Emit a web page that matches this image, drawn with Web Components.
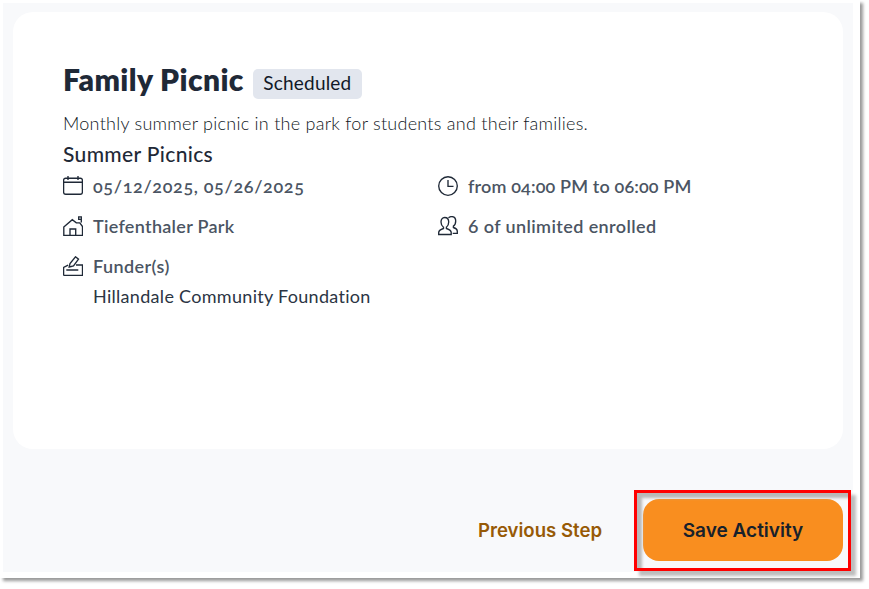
<!DOCTYPE html>
<html>
<head>
<meta charset="utf-8">
<style>
  html, body { margin: 0; padding: 0; background: #fff; }
  body { font-family: "Lato", "Liberation Sans", sans-serif; width: 869px; height: 589px; overflow: hidden; }
  .date { letter-spacing: .65px; font-variant-numeric: oldstyle-nums; }
  .time { letter-spacing: .15px; font-variant-numeric: oldstyle-nums; }
  .enrolled { letter-spacing: .4px; }
  .funder { letter-spacing: .42px; }
</style>
</head>
<body>
<shot-frame>
  <activity-card>
    <span slot="title">Family Picnic</span>
    <status-badge slot="badge">Scheduled</status-badge>
    <span slot="description">Monthly summer picnic in the park for students and their families.</span>
    <span slot="series">Summer Picnics</span>
    <detail-item>
      <svg slot="icon" viewBox="0 0 20 20"><rect x=".6" y="2.2" width="18.8" height="16" rx="2"/><path d="M.6 6.2h18.8M5 0v4M15 0v4"/></svg>
      <span class="date">05/12/2025, 05/26/2025</span>
    </detail-item>
    <detail-item>
      <svg slot="icon" viewBox="0 0 20 20"><circle cx="10" cy="10" r="9.3"/><path d="M10 4v6.4h5.5"/></svg>
      <span class="time">from 04:00 PM to 06:00 PM</span>
    </detail-item>
    <detail-item>
      <svg slot="icon" viewBox="0 0 20 20"><path d="M.8 11 9.3 3.7l4 3.2h3.5l2.700 3.600v9H.8zM7 19.500V13h5.700v6.500"/><path d="M15.700.8h2.600v2.600h-2.600zM18.300 3.400v3"/></svg>
      <span>Tiefenthaler Park</span>
    </detail-item>
    <detail-item>
      <svg slot="icon" viewBox="0 0 20 20"><path d="M6.700 1.500c2.500 0 4 2 4 4.500s-1.300 4.500-2.300 5.200v1.300c2.500.8 4.800 1.700 4.800 4v2H.7v-2c0-2.300 2.300-3.200 4.800-4v-1.300C4.500 10.500 3 8.500 3 6s1.300-4.500 3.700-4.500z"/><path d="M10.500 1.800c.8-.8 2-1.200 3.200-1.200 2.500 0 4 2 4 4.500s-1.300 4.400-2.300 5v1.400c2 .7 3.900 1.500 3.900 3.700v2.200h-4.600"/></svg>
      <span class="enrolled">6 of unlimited enrolled</span>
    </detail-item>
    <detail-item>
      <svg slot="icon" viewBox="0 0 20 20"><path d="M.6 19.500V11.400l4.500-2.300M13 9h6.500v10.500H.6M3.300 14h12"/><path d="M6.200 11 7 7.500 12.500.8l3 2.400L10.500 10z"/></svg>
      <span class="funder">Funder(s)</span>
      <span slot="extra">Hillandale Community Foundation</span>
    </detail-item>
  </activity-card>
  <action-bar>
    <prev-link>Previous Step</prev-link>
    <save-button>Save Activity</save-button>
  </action-bar>
</shot-frame>

<script>
function define(name, html) {
  customElements.define(name, class extends HTMLElement {
    constructor() {
      super();
      this.attachShadow({ mode: "open" }).innerHTML = html;
    }
  });
}

define("shot-frame", `
  <style>
    :host { display: block; width: 860px; height: 578px; box-sizing: border-box; padding: 3px 7px 6px 3px;
      background: #fff; box-shadow: 3px 3px 3px #9a9a9a; }
    .page { height: 100%; box-sizing: border-box; background: #f8f9fb; padding: 9px 10px 0 10px; display: flex; flex-direction: column; }
  </style>
  <div class="page"><slot></slot></div>
`);

define("activity-card", `
  <style>
    :host { display: block; height: 437px; box-sizing: border-box; background: #fff; border-radius: 20px; padding: 48px 50px 0; }
    .head { display: flex; align-items: center; gap: 9px; height: 37px; }
    .title { font-size: 30px; font-weight: 800; color: #1f2937; letter-spacing: .4px; }
    .desc { margin-top: 14px; height: 24px; line-height: 24px; font-size: 18px; font-weight: 300; color: #0f1723; letter-spacing: .26px; }
    .series { margin-top: 6px; height: 26px; line-height: 26px; font-size: 21px; font-weight: 500; color: #1f2937; letter-spacing: .35px; }
    .grid { margin-top: -1px; display: grid; grid-template-columns: 375px 1fr; align-items: start; }
  </style>
  <div class="head"><span class="title"><slot name="title"></slot></span><slot name="badge"></slot></div>
  <div class="desc"><slot name="description"></slot></div>
  <div class="series"><slot name="series"></slot></div>
  <div class="grid"><slot></slot></div>
`);

define("status-badge", `
  <style>
    :host { display: inline-flex; align-items: center; justify-content: center; box-sizing: border-box; width: 109px; height: 30px; margin-top: 10px; padding-bottom: 2px;
      background: #e2e6ee; border-radius: 5px; font-size: 19px; color: #111827; letter-spacing: .2px; }
  </style>
  <slot></slot>
`);

define("detail-item", `
  <style>
    :host { display: grid; grid-template-columns: 20px 1fr; column-gap: 10px; align-items: center; grid-template-rows: 40px;
      font-size: 18px; font-weight: 600; color: #4b5563; letter-spacing: .3px; }
    ::slotted(svg) { width: 20px; height: 20px; fill: none; stroke: #1f2937; stroke-width: 1.35; }
    .extra { grid-column: 2; font-weight: 400; color: #2b3544; line-height: 20px; letter-spacing: .3px; }
  </style>
  <slot name="icon"></slot>
  <div><slot></slot></div>
  <div class="extra"><slot name="extra"></slot></div>
`);

define("action-bar", `
  <style>
    :host { display: flex; justify-content: flex-end; align-items: flex-start; gap: 41px; flex: 1; padding-top: 41px; box-sizing: border-box; }
  </style>
  <slot></slot>
`);

define("prev-link", `
  <style>
    :host { display: block; line-height: 80px; font-family: "Inter", sans-serif; font-size: 18.6px; font-weight: 600; color: #975a06; }
  </style>
  <slot></slot>
`);

define("save-button", `
  <style>
    :host { display: block; position: relative; width: 200px; height: 62px; margin-top: 9px; border-radius: 16px; background: #f98e1f;
      font-family: "Inter", sans-serif; font-size: 19px; font-weight: 600; color: #17212b; }
    .label { display: flex; height: 100%; align-items: center; justify-content: center; }
    .mark { position: absolute; left: -9px; top: -9px; width: 217px; height: 81px; box-sizing: border-box; border: 3px solid #f00;
      box-shadow: 5px 5px 3px #bdbdbd, inset 5px 5px 3px #b8b8b8; pointer-events: none; }
  </style>
  <div class="label"><slot></slot></div>
  <div class="mark"></div>
`);
</script>
</body>
</html>
